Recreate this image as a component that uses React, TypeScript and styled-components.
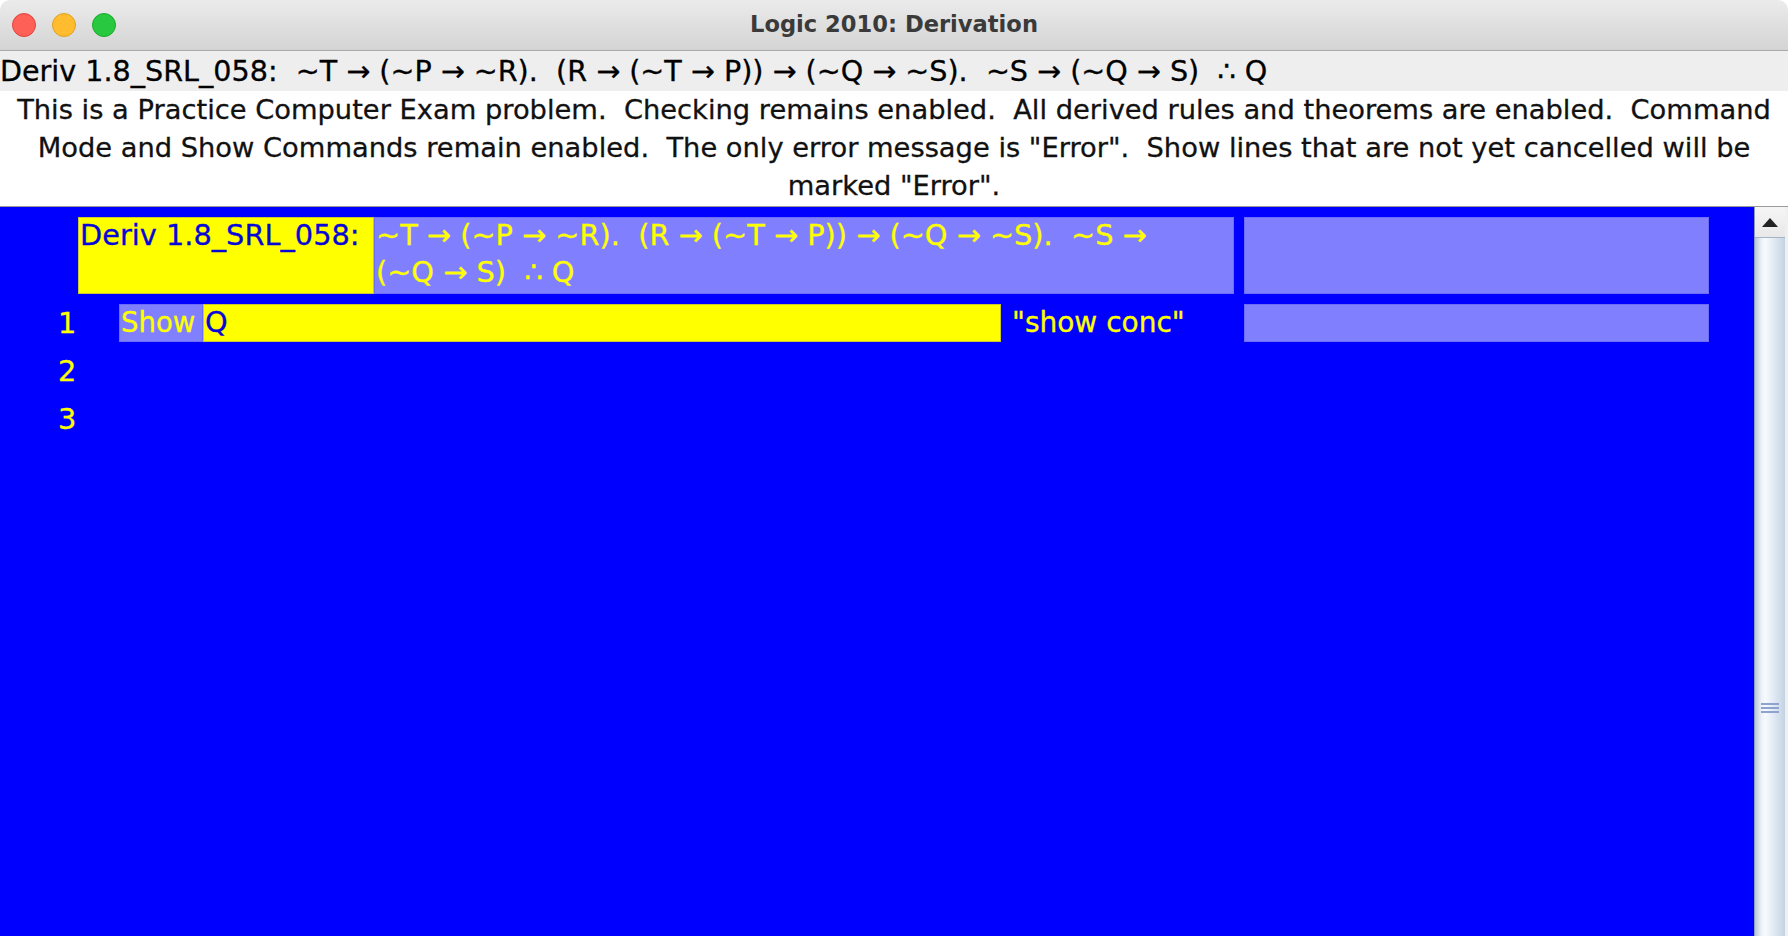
import React from "react";
import styled, { createGlobalStyle } from "styled-components";

const GlobalStyle = createGlobalStyle`
  html, body {
    margin: 0;
    padding: 0;
    background: #ffffff;
  }
  body {
    font-family: "DejaVu Sans", "Liberation Sans", sans-serif;
    -webkit-text-stroke: 0.3px currentColor;
  }
  #root {
    height: 100vh;
  }
`;

const YELLOW = "#ffff00";
const LAVENDER = "#8080ff";
const BLUE = "#0000ff";
const INK = "#0606d8";

const Window = styled.div`
  display: flex;
  flex-direction: column;
  height: 100vh;
  overflow: hidden;
`;

const TitleBar = styled.div`
  display: grid;
  grid-template-columns: 1fr auto 1fr;
  align-items: center;
  height: 50px;
  flex-shrink: 0;
  background: linear-gradient(#ebebeb, #d4d4d4);
  border-bottom: 1px solid #a9a9a9;
  border-radius: 10px 10px 0 0;
`;

const Lights = styled.div`
  display: flex;
  gap: 16px;
  padding-left: 12px;
`;

const Light = styled.span<{ $fill: string; $edge: string }>`
  width: 24px;
  height: 24px;
  border-radius: 50%;
  box-sizing: border-box;
  background: ${({ $fill }) => $fill};
  border: 1px solid ${({ $edge }) => $edge};
`;

const Title = styled.div`
  font-size: 22.6px;
  font-weight: bold;
  color: #3a3a3a;
  -webkit-text-stroke: 0;
  margin-top: -3px;
`;

const FormulaBar = styled.div`
  height: 40px;
  flex-shrink: 0;
  background: #eeeeee;
  color: #000000;
  font-size: 28.6px;
  line-height: 40px;
  white-space: pre;
  overflow: hidden;
`;

const Notes = styled.div`
  flex-shrink: 0;
  background: #ffffff;
  color: #111111;
  font-size: 27.3px;
  line-height: 38px;
  text-align: center;
  padding-bottom: 1px;
`;

const NoteLine = styled.div`
  white-space: pre;
`;

const Workspace = styled.div`
  flex: 1;
  display: flex;
  min-height: 0;
  border-top: 1px solid #9b9b9b;
`;

const Canvas = styled.div`
  flex: 1;
  display: flex;
  flex-direction: column;
  gap: 10px;
  padding-top: 10px;
  background: ${BLUE};
  font-size: 28.8px;
`;

const HeaderRow = styled.div`
  display: flex;
  height: 77px;
  padding-left: 78px;
`;

const Row = styled.div`
  display: flex;
  align-items: stretch;
  height: 38px;
`;

const Cell = styled.div<{ $bg?: string; $ink: string; $w: number; $gap?: number }>`
  box-sizing: border-box;
  width: ${({ $w }) => $w}px;
  flex-shrink: 0;
  margin-left: ${({ $gap }) => $gap ?? 0}px;
  padding: 0 2px;
  background: ${({ $bg }) => $bg ?? "transparent"};
  color: ${({ $ink }) => $ink};
  line-height: 37px;
  white-space: pre;
  overflow: hidden;
  box-shadow: ${({ $bg }) =>
    $bg === LAVENDER
      ? "inset 0 0 0 1px #6c6cf4"
      : $bg === YELLOW
      ? "inset 0 0 0 1px #c8c830"
      : "none"};
`;

const ShortCell = styled(Cell)`
  font-size: 27.5px;
`;

const LineNo = styled.div`
  width: 119px;
  flex-shrink: 0;
  box-sizing: border-box;
  padding-left: 58px;
  color: ${YELLOW};
  line-height: 38px;
`;

const Comment = styled.div`
  width: 243px;
  flex-shrink: 0;
  box-sizing: border-box;
  padding-left: 11px;
  color: ${YELLOW};
  font-size: 28px;
  line-height: 38px;
  white-space: pre;
`;

const ScrollBar = styled.div`
  width: 30px;
  flex-shrink: 0;
  display: flex;
  flex-direction: column;
  border-left: 1px solid #8d9cb4;
  border-right: 3px solid #f0f0f0;
`;

const UpButton = styled.div`
  height: 30px;
  flex-shrink: 0;
  display: flex;
  align-items: center;
  justify-content: center;
  background: linear-gradient(#f6f6f6, #e8e8e8);
  border-bottom: 1px solid #a6b3c7;
`;

const Thumb = styled.div`
  flex: 1;
  display: flex;
  flex-direction: column;
  align-items: center;
  background: linear-gradient(
    90deg,
    #b7c6da 0%,
    #eef3f9 22%,
    #f7fafd 35%,
    #dfe8f2 65%,
    #c3d2e3 100%
  );
`;

const Grip = styled.div`
  margin-top: 465px;
  display: flex;
  flex-direction: column;
  gap: 2px;
`;

const GripLine = styled.span`
  width: 18px;
  height: 2px;
  background: #8ea3cf;
`;

export default function App() {
  return (
    <>
      <GlobalStyle />
      <Window>
        <TitleBar>
          <Lights>
            <Light $fill="#fe5f57" $edge="#e0443e" />
            <Light $fill="#febc2e" $edge="#dea123" />
            <Light $fill="#28c840" $edge="#1aab29" />
          </Lights>
          <Title>Logic 2010: Derivation</Title>
          <span />
        </TitleBar>

        <FormulaBar>
          {"Deriv 1.8_SRL_058:  ~T → (~P → ~R).  (R → (~T → P)) → (~Q → ~S).  ~S → (~Q → S)  ∴ Q"}
        </FormulaBar>

        <Notes>
          <NoteLine>
            {"This is a Practice Computer Exam problem.  Checking remains enabled.  All derived rules and theorems are enabled.  Command"}
          </NoteLine>
          <NoteLine>
            {'Mode and Show Commands remain enabled.  The only error message is "Error".  Show lines that are not yet cancelled will be'}
          </NoteLine>
          <NoteLine>{'marked "Error".'}</NoteLine>
        </Notes>

        <Workspace>
          <Canvas>
            <HeaderRow>
              <Cell $bg={YELLOW} $ink={INK} $w={296}>
                Deriv 1.8_SRL_058:
              </Cell>
              <Cell $bg={LAVENDER} $ink={YELLOW} $w={860}>
                {"~T → (~P → ~R).  (R → (~T → P)) → (~Q → ~S).  ~S →\n(~Q → S)  ∴ Q"}
              </Cell>
              <Cell $bg={LAVENDER} $ink={YELLOW} $w={465} $gap={10} />
            </HeaderRow>

            <Row>
              <LineNo>1</LineNo>
              <ShortCell $bg={LAVENDER} $ink={YELLOW} $w={84}>
                Show
              </ShortCell>
              <Cell $bg={YELLOW} $ink={INK} $w={798}>
                Q
              </Cell>
              <Comment>"show conc"</Comment>
              <Cell $bg={LAVENDER} $ink={YELLOW} $w={465} />
            </Row>
            <Row>
              <LineNo>2</LineNo>
            </Row>
            <Row>
              <LineNo>3</LineNo>
            </Row>
          </Canvas>

          <ScrollBar>
            <UpButton>
              <svg width="16" height="9" viewBox="0 0 16 9">
                <path d="M8 0 L16 9 L0 9 Z" fill="#222222" />
              </svg>
            </UpButton>
            <Thumb>
              <Grip>
                <GripLine />
                <GripLine />
                <GripLine />
              </Grip>
            </Thumb>
          </ScrollBar>
        </Workspace>
      </Window>
    </>
  );
}
